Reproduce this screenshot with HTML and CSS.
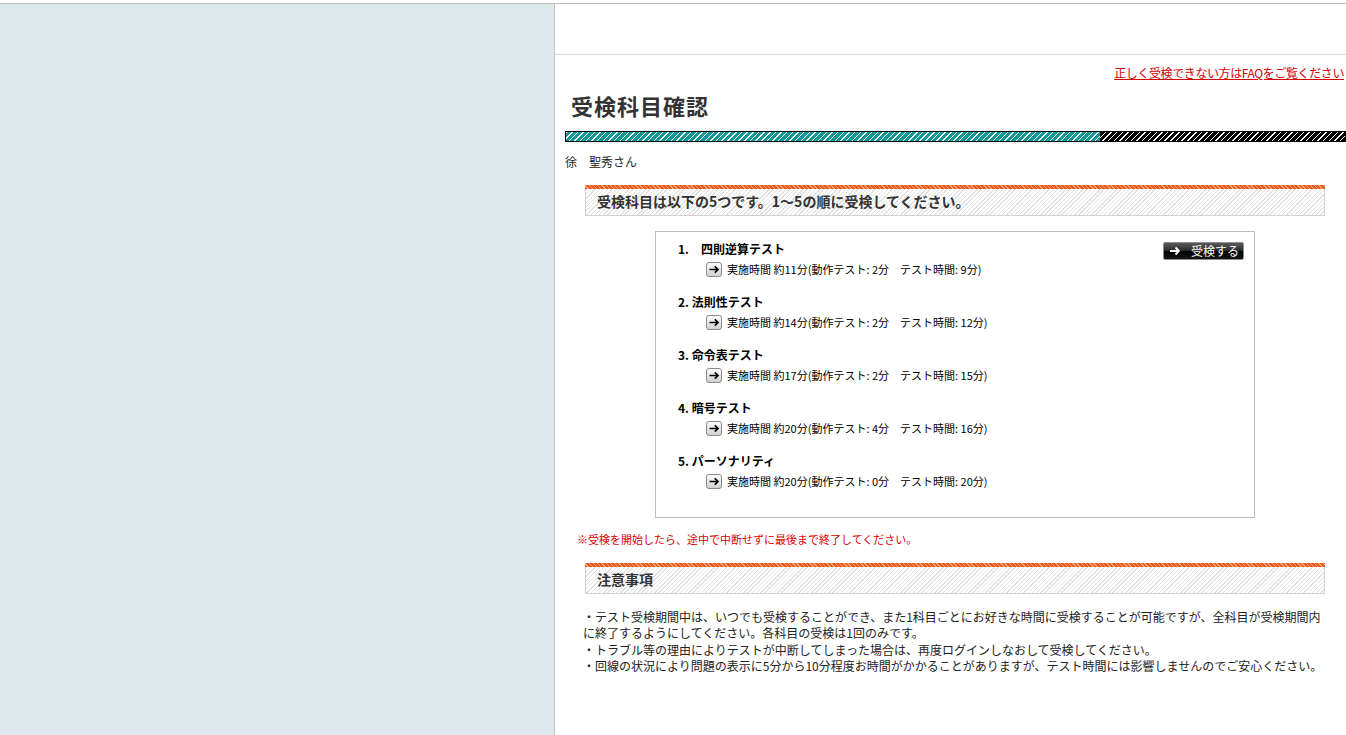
FILE: index.html
```html
<!DOCTYPE html>
<html lang="ja">
<head>
<meta charset="utf-8">
<title>受検科目確認</title>
<link rel="stylesheet" href="styles.css">
</head>
<body>
<div class="page">
  <aside class="sidebar"></aside>
  <main class="main">
    <div class="header-band"></div>
    <div class="faq"><a href="#" class="faq-link">正しく受検できない方はFAQをご覧ください</a></div>
    <h1 class="title">受検科目確認</h1>
    <div class="progress"><div class="progress-done" style="width:68.5%"></div></div>
    <div class="name">徐　聖秀さん</div>

    <section class="section">
      <h2 class="sec-head"><span class="sec-text">受検科目は以下の5つです。1～5の順に受検してください。</span></h2>
      <div class="subjects">
        <div class="item">
          <div class="item-head">
            <span class="item-title">1.　四則逆算テスト</span>
            <a href="#" class="btn">
              <svg class="btn-arrow" width="12" height="10" viewBox="0 0 12 10"><path d="M1 5H10M6.5 1.5L10 5L6.5 8.5" fill="none" stroke="#fff" stroke-width="1.8"/></svg>
              <span>受検する</span>
            </a>
          </div>
          <div class="detail"><svg class="ico" width="16" height="15" viewBox="0 0 16 15"><defs><linearGradient id="g1" x1="0" y1="0" x2="0" y2="1"><stop offset="0" stop-color="#ffffff"/><stop offset="1" stop-color="#cfcfcf"/></linearGradient></defs><rect x="0.5" y="0.5" width="15" height="14" rx="2.5" fill="url(#g1)" stroke="#8a8a8a"/><path d="M3.5 7.5H12M8.8 4.3L12 7.5L8.8 10.7" fill="none" stroke="#000" stroke-width="1.7"/></svg><span>実施時間 約11分(動作テスト: 2分　テスト時間: 9分)</span></div>
        </div>
        <div class="item">
          <div class="item-head"><span class="item-title">2. 法則性テスト</span></div>
          <div class="detail"><svg class="ico" width="16" height="15" viewBox="0 0 16 15"><rect x="0.5" y="0.5" width="15" height="14" rx="2.5" fill="url(#g1)" stroke="#8a8a8a"/><path d="M3.5 7.5H12M8.8 4.3L12 7.5L8.8 10.7" fill="none" stroke="#000" stroke-width="1.7"/></svg><span>実施時間 約14分(動作テスト: 2分　テスト時間: 12分)</span></div>
        </div>
        <div class="item">
          <div class="item-head"><span class="item-title">3. 命令表テスト</span></div>
          <div class="detail"><svg class="ico" width="16" height="15" viewBox="0 0 16 15"><rect x="0.5" y="0.5" width="15" height="14" rx="2.5" fill="url(#g1)" stroke="#8a8a8a"/><path d="M3.5 7.5H12M8.8 4.3L12 7.5L8.8 10.7" fill="none" stroke="#000" stroke-width="1.7"/></svg><span>実施時間 約17分(動作テスト: 2分　テスト時間: 15分)</span></div>
        </div>
        <div class="item">
          <div class="item-head"><span class="item-title">4. 暗号テスト</span></div>
          <div class="detail"><svg class="ico" width="16" height="15" viewBox="0 0 16 15"><rect x="0.5" y="0.5" width="15" height="14" rx="2.5" fill="url(#g1)" stroke="#8a8a8a"/><path d="M3.5 7.5H12M8.8 4.3L12 7.5L8.8 10.7" fill="none" stroke="#000" stroke-width="1.7"/></svg><span>実施時間 約20分(動作テスト: 4分　テスト時間: 16分)</span></div>
        </div>
        <div class="item">
          <div class="item-head"><span class="item-title">5. パーソナリティ</span></div>
          <div class="detail"><svg class="ico" width="16" height="15" viewBox="0 0 16 15"><rect x="0.5" y="0.5" width="15" height="14" rx="2.5" fill="url(#g1)" stroke="#8a8a8a"/><path d="M3.5 7.5H12M8.8 4.3L12 7.5L8.8 10.7" fill="none" stroke="#000" stroke-width="1.7"/></svg><span>実施時間 約20分(動作テスト: 0分　テスト時間: 20分)</span></div>
        </div>
      </div>
      <p class="warn">※受検を開始したら、途中で中断せずに最後まで終了してください。</p>
      <h2 class="sec-head"><span class="sec-text">注意事項</span></h2>
      <div class="notes">
        <p>・テスト受検期間中は、いつでも受検することができ、また1科目ごとにお好きな時間に受検することが可能ですが、全科目が受検期間内に終了するようにしてください。各科目の受検は1回のみです。</p>
        <p>・トラブル等の理由によりテストが中断してしまった場合は、再度ログインしなおして受検してください。</p>
        <p>・回線の状況により問題の表示に5分から10分程度お時間がかかることがありますが、テスト時間には影響しませんのでご安心ください。</p>
      </div>
    </section>
  </main>
</div>
</body>
</html>
```

FILE: styles.css
```css
html, body {
  margin: 0;
  padding: 0;
  background: #fff;
}
body {
  font-family: "Noto Sans CJK JP", "Liberation Sans", sans-serif;
  font-size: 12px;
  color: #222;
  overflow: hidden;
}
.page {
  margin-top: 3px;
  border-top: 1px solid #bdbdbd;
  display: flex;
  height: 731px;
}
.sidebar {
  width: 554px;
  flex: none;
  background: #dde8ed;
  border-right: 1px solid #c4c4c4;
}
.main {
  flex: 1;
  min-width: 0;
}
.header-band {
  height: 50px;
  border-bottom: 1px solid #dcdcdc;
}
.faq {
  margin-top: 11px;
  text-align: right;
  padding-right: 2px;
  line-height: 14px;
  height: 14px;
}
.faq-link {
  color: #d40000;
  text-decoration: underline;
  font-size: 12px;
  letter-spacing: -0.4px;
}
.title {
  margin: 12px 0 0 16px;
  font-size: 22px;
  letter-spacing: 1px;
  line-height: 26px;
  font-weight: bold;
  color: #333;
}
.progress {
  margin: 13px 0 0 10px;
  height: 9px;
  border: 1px solid #000;
  background: repeating-linear-gradient(-45deg, #000 0 3px, #fff 3px 4px);
}
.progress-done {
  height: 100%;
  background: repeating-linear-gradient(-45deg, #10979a 0 3px, #fff 3px 4px);
}
.name {
  margin: 12px 0 0 10px;
  line-height: 16px;
  color: #222;
}
.section {
  margin: 15px 21px 0 30px;
}
.sec-head {
  margin: 0;
  height: 26px;
  border: 1px solid #d2d2d2;
  border-top: 4px solid #f06a2a;
  background: repeating-linear-gradient(-45deg, #fff 0 2px, #e2e2e2 2px 3px);
  position: relative;
  font-size: 14px;
  font-weight: bold;
  color: #333;
  line-height: 25px;
  padding-left: 11px;
}
.sec-head::before {
  content: "";
  position: absolute;
  left: -1px;
  right: -1px;
  top: -4px;
  height: 4px;
  background: repeating-linear-gradient(45deg, #ee5a1c 0 2px, #f7a57a 2px 3px);
}
.subjects {
  width: 598px;
  margin: 15px auto 0;
  border: 1px solid #bbb;
  padding: 9px 0 0 0;
  height: 276px;
}
.item {
  padding: 0 10px 0 22px;
  margin-bottom: 15px;
}
.item-head {
  display: flex;
  justify-content: space-between;
  align-items: flex-start;
  height: 16px;
  line-height: 16px;
}
.item-title {
  font-weight: bold;
  color: #000;
}
.btn {
  display: flex;
  align-items: center;
  gap: 10px;
  box-sizing: border-box;
  width: 81px;
  height: 18px;
  margin-top: 1px;
  padding-left: 5px;
  border: 1px solid #8c8c8c;
  border-radius: 2px;
  background: linear-gradient(#5a5a5a 0%, #2a2a2a 48%, #000 52%, #151515 100%);
  color: #fff;
  text-decoration: none;
  font-size: 12px;
  line-height: 16px;
}
.btn-arrow {
  flex: none;
}
.detail {
  display: flex;
  align-items: center;
  gap: 5px;
  margin-top: 2px;
  padding-left: 28px;
  height: 20px;
  font-size: 11px;
  color: #000;
}
.ico {
  flex: none;
}
.warn {
  margin: 13px 0 16px -8px;
  color: #e00000;
  font-size: 11px;
  line-height: 16px;
}
.notes {
  margin: 15px 0 0 -2px;
  width: 748px;
  color: #222;
}
.notes p {
  margin: 0;
  line-height: 16.3px;
}
```
